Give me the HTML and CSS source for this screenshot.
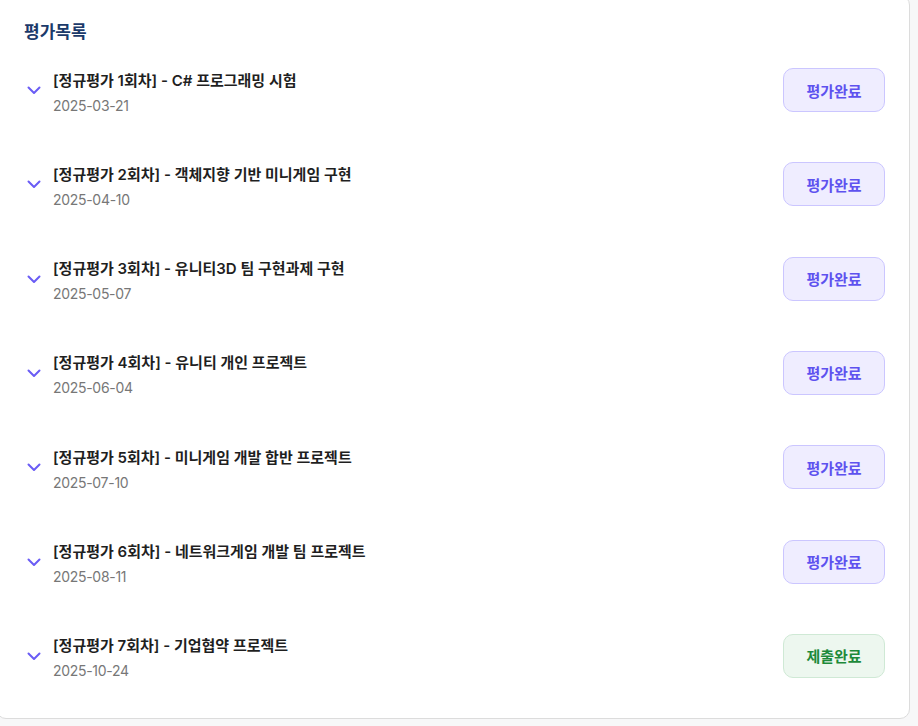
FILE: index.html
```html
<!DOCTYPE html>
<html lang="ko">
<head>
<meta charset="utf-8">
<title>평가목록</title>
<link rel="stylesheet" href="styles.css">
</head>
<body>
<section class="card">
  <h2 class="heading">평가목록</h2>
  <ul class="list">
    <li class="row">
      <svg class="chev" width="16" height="16" viewBox="0 0 16 16"><path d="M2.5 5.5 L8 11 L13.5 5.5"/></svg>
      <div class="info"><div class="title">[정규평가 1회차] - C# 프로그래밍 시험</div><div class="date">2025-03-21</div></div>
      <span class="badge done">평가완료</span>
    </li>
    <li class="row">
      <svg class="chev" width="16" height="16" viewBox="0 0 16 16"><path d="M2.5 5.5 L8 11 L13.5 5.5"/></svg>
      <div class="info"><div class="title">[정규평가 2회차] - 객체지향 기반 미니게임 구현</div><div class="date">2025-04-10</div></div>
      <span class="badge done">평가완료</span>
    </li>
    <li class="row">
      <svg class="chev" width="16" height="16" viewBox="0 0 16 16"><path d="M2.5 5.5 L8 11 L13.5 5.5"/></svg>
      <div class="info"><div class="title">[정규평가 3회차] - 유니티3D 팀 구현과제 구현</div><div class="date">2025-05-07</div></div>
      <span class="badge done">평가완료</span>
    </li>
    <li class="row">
      <svg class="chev" width="16" height="16" viewBox="0 0 16 16"><path d="M2.5 5.5 L8 11 L13.5 5.5"/></svg>
      <div class="info"><div class="title">[정규평가 4회차] - 유니티 개인 프로젝트</div><div class="date">2025-06-04</div></div>
      <span class="badge done">평가완료</span>
    </li>
    <li class="row">
      <svg class="chev" width="16" height="16" viewBox="0 0 16 16"><path d="M2.5 5.5 L8 11 L13.5 5.5"/></svg>
      <div class="info"><div class="title">[정규평가 5회차] - 미니게임 개발 합반 프로젝트</div><div class="date">2025-07-10</div></div>
      <span class="badge done">평가완료</span>
    </li>
    <li class="row">
      <svg class="chev" width="16" height="16" viewBox="0 0 16 16"><path d="M2.5 5.5 L8 11 L13.5 5.5"/></svg>
      <div class="info"><div class="title">[정규평가 6회차] - 네트워크게임 개발 팀 프로젝트</div><div class="date">2025-08-11</div></div>
      <span class="badge done">평가완료</span>
    </li>
    <li class="row">
      <svg class="chev" width="16" height="16" viewBox="0 0 16 16"><path d="M2.5 5.5 L8 11 L13.5 5.5"/></svg>
      <div class="info"><div class="title">[정규평가 7회차] - 기업협약 프로젝트</div><div class="date">2025-10-24</div></div>
      <span class="badge submitted">제출완료</span>
    </li>
  </ul>
</section>
</body>
</html>
```
FILE: styles.css
```css
html, body {
  margin: 0;
  padding: 0;
  background: #f7f7f8;
  font-family: "Inter", "Noto Sans CJK KR", sans-serif;
  overflow: hidden;
}
.card {
  box-sizing: border-box;
  margin: -5px 8px 6px -4px;
  background: #fff;
  border: 1px solid #dcdcdc;
  border-radius: 10px;
  padding: 24px 24px 40px 27px;
}
.heading {
  margin: 0;
  font-size: 17px;
  line-height: 24px;
  font-weight: 700;
  color: #1b3a6a;
}
.list {
  list-style: none;
  margin: 24px 0 0 0;
  padding: 0;
  display: flex;
  flex-direction: column;
  gap: 50.33px;
}
.row {
  display: flex;
  align-items: center;
  height: 44px;
}
.chev {
  flex: none;
  margin-left: 2px;
  margin-right: 11px;
}
.chev path {
  fill: none;
  stroke: #6a5cf5;
  stroke-width: 2;
  stroke-linecap: round;
  stroke-linejoin: round;
}
.info {
  flex: 1;
  display: flex;
  flex-direction: column;
  gap: 4px;
  margin-top: 5px;
}
.title {
  font-size: 15px;
  line-height: 21px;
  font-weight: 600;
  color: #1f1f1f;
}
.date {
  font-size: 14px;
  line-height: 21px;
  letter-spacing: -0.3px;
  color: #777;
}
.badge {
  box-sizing: border-box;
  width: 102px;
  height: 44px;
  display: flex;
  align-items: center;
  justify-content: center;
  border-radius: 10px;
  font-size: 15px;
  font-weight: 700;
  border: 1px solid;
}
.badge.done {
  background: #efedff;
  border-color: #cbc6ff;
  color: #5e52ef;
}
.badge.submitted {
  background: #edf7ef;
  border-color: #cfe9d5;
  color: #1d8a3a;
}
```
